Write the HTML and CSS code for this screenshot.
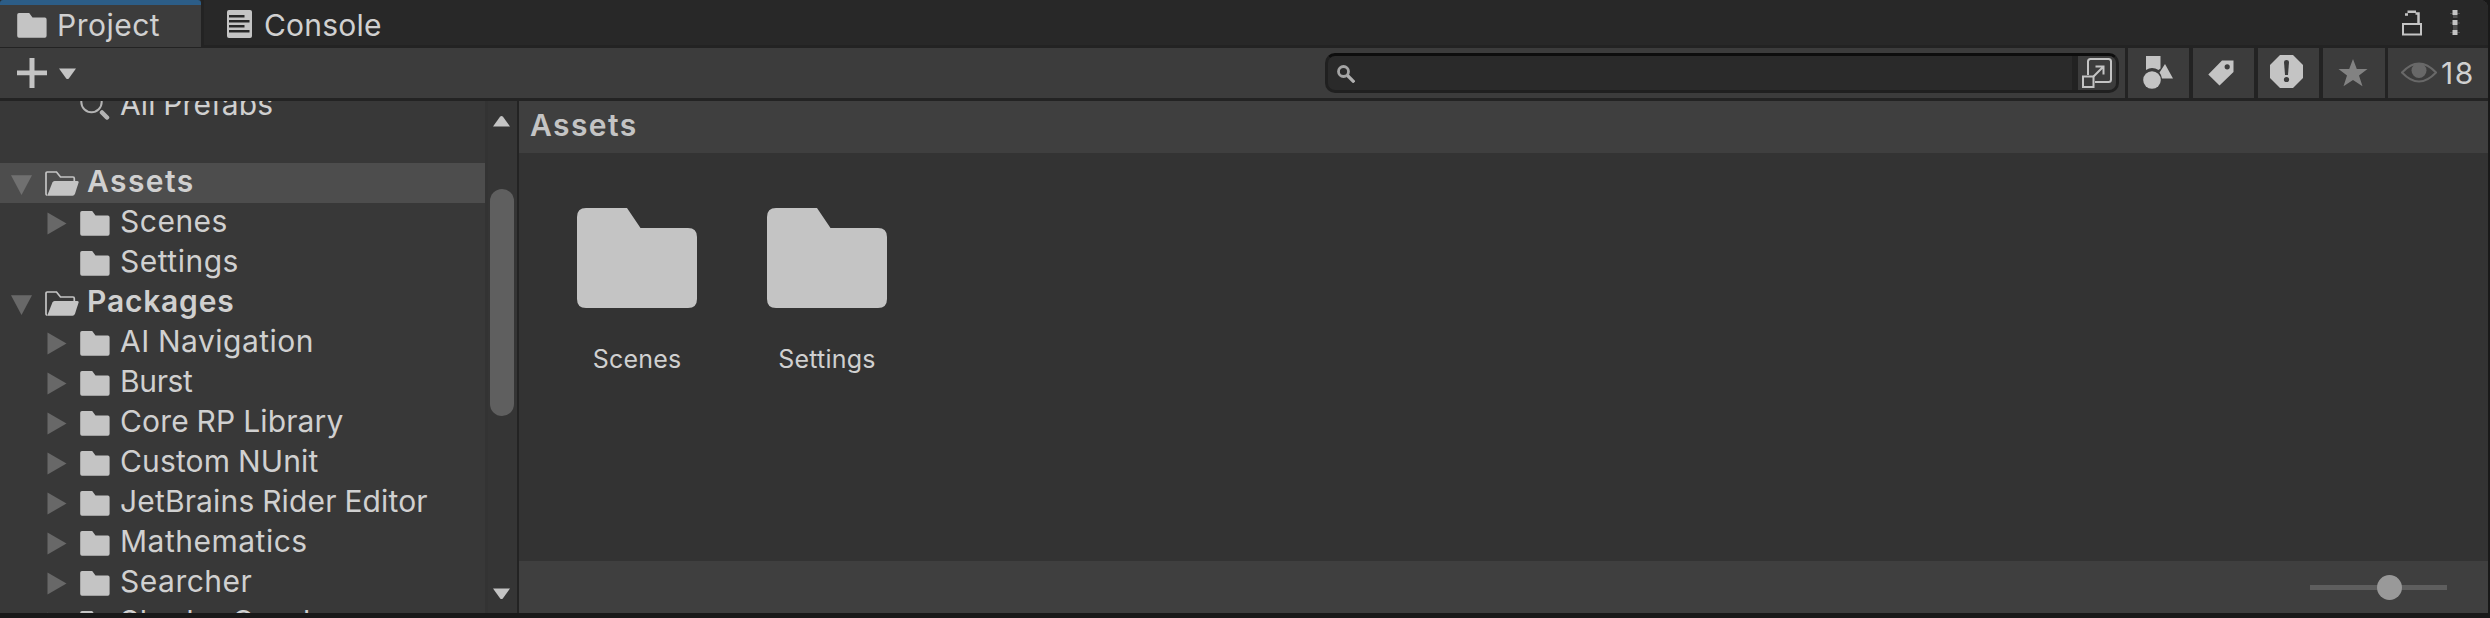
FILE: index.html
```html
<!DOCTYPE html>
<html lang="en">
<head>
<meta charset="utf-8">
<title>Project</title>
<link rel="stylesheet" href="styles.css">
</head>
<body>
<svg class="defs" width="0" height="0">
  <symbol id="folder" viewBox="0 0 30 25"><path d="M2 0H12.2L15.5 4.6H27.8Q29.6 4.6 29.6 6.4V22.8Q29.6 24.7 27.8 24.7H2Q.2 24.7 .2 22.8V1.8Q.2 0 2 0Z"/></symbol>
  <symbol id="folder-big" viewBox="0 0 120 100"><path d="M9 0H50L63.500 20H111Q120 20 120 29V91Q120 100 111 100H9Q0 100 0 91V9Q0 0 9 0Z"/></symbol>
  <symbol id="open" viewBox="0 0 34 25"><path d="M2.200 24Q1 24 1 22.500V2.200Q1 1 2.200 1H11.500L15.500 6H28Q29.300 6 29.300 7.500V10" fill="none" stroke="#c4c4c4" stroke-width="1.700"/><path d="M9.500 10H32.500Q34 10 33.600 11.500L30 22.800Q29.300 24.800 27.500 24.800H2.200L7.400 11.500Q8 10 9.500 10Z"/></symbol>
  <symbol id="right" viewBox="0 0 20 23"><path d="M.5 .5L19.500 11.500L.5 22.500Z"/></symbol>
  <symbol id="down" viewBox="0 0 21 20"><path d="M0 .3H21L10.500 20Z"/></symbol>
  <symbol id="small-down" viewBox="0 0 19 12"><path d="M1 .5H18L11 10.200Q9.500 12 8 10.200Z"/></symbol>
</svg>
<div class="window">
  <header class="tabs">
    <div class="tab active"><svg class="tab-folder"><use href="#folder"/></svg><span>Project</span></div>
    <div class="tab console">
      <svg class="log" viewBox="0 0 25 28"><rect width="25" height="28" rx="2"/><path d="M2 6.200H17.500M2 11.200H22.500M2 16.200H17.500M2 21.300H22.500" stroke="#282828" stroke-width="2.500"/></svg>
      <span>Console</span>
    </div>
    <div class="window-tools">
      <svg class="line" width="20" height="26" viewBox="0 0 20 26" stroke="#c4c4c4"><rect x="1" y="14" width="18" height="10.500" stroke-width="2"/><path d="M3 4.500H6M5.500 1.800H14" stroke-width="2.500"/><path d="M13.500 3.500H16.500V13.500" stroke-width="2.500"/></svg>
      <svg width="10" height="26" viewBox="0 0 10 26"><path d="M0 3H10V4H0ZM0 12.500H10V13.500H0ZM0 22H10V23H0Z" opacity=".25"/><path d="M3 5H7.500V8H3ZM3 15H7.500V20H3Z" opacity=".25"/><path d="M2.500 0H7.500V5H2.500ZM2.500 10H7.500V15H2.500ZM2.500 20H7.500V25H2.500Z"/></svg>
    </div>
  </header>
  <div class="toolbar">
    <div class="create">
      <svg width="30" height="30" viewBox="0 0 30 30"><path d="M12.500 0H17.500V12.500H30V17.200H17.500V30H12.500V17.200H0V12.500H12.500Z"/></svg>
      <svg class="caret"><use href="#small-down"/></svg>
    </div>
    <div class="search">
      <svg class="lens line" viewBox="0 0 18 18"><circle cx="6.500" cy="6.500" r="5" stroke="#a4a4a4" stroke-width="2.800"/><path d="M10.500 10.500L17.300 17.300" stroke="#b0b0b0" stroke-width="3.200"/></svg>
      <div class="expand"><svg class="line" width="30" height="30" viewBox="0 0 30 30" stroke="#c4c4c4" stroke-width="2"><path d="M6 17V3.500Q6 1 8.500 1H26.500Q29 1 29 3.500V21.500Q29 24 26.500 24H13"/><rect x="1" y="18.500" width="10.500" height="10.500"/><path d="M11.500 18.500L21 9M13.500 8.500H21.500V16.500"/></svg></div>
    </div>
    <div class="tool"><svg width="30" height="33" viewBox="0 0 30 33"><path d="M3 0H17.500V12.500L15.500 14Q12.500 12 9 12Q6 12 3 14Z"/><circle cx="9" cy="24" r="8.800"/><path d="M22 8L30 22.500H19Q18.500 19 16.500 16.500Z"/></svg></div>
    <div class="tool"><svg width="26" height="26" viewBox="0 0 26 26"><path fill-rule="evenodd" d="M14 .5H25.500V12L11.500 25.500L.3 14.500ZM19.200 4.200A2.600 2.600 0 1 0 19.200 9.400A2.600 2.600 0 1 0 19.200 4.200Z"/></svg></div>
    <div class="tool"><svg width="33" height="33" viewBox="0 0 33 33"><path d="M10 0H23L33 10V23L23 33H10L0 23V10Z"/><path fill="#3c3c3c" d="M14 7Q14 5 16.500 5Q19 5 19 7L18 20H15Z"/><circle cx="16.500" cy="24.500" r="2.600" fill="#3c3c3c"/></svg></div>
    <div class="tool"><svg class="star" width="30" height="28" viewBox="0 0 30 28"><path d="M15 0L18.800 10H29.500L21 16.500L24.500 27.300L15 21L5.500 27.300L9 16.500L.5 10H11.200Z"/></svg></div>
    <div class="tool hidden-count"><svg width="36" height="22" viewBox="0 0 36 22"><path d="M1 10.500Q18-7.500 35 10.500Q18 28.500 1 10.500Z" fill="none" stroke="#686868" stroke-width="2"/><circle cx="18" cy="8.500" r="7.500" fill="#686868"/></svg><span>18</span></div>
  </div>
  <div class="main">
    <nav class="tree">
      <div class="row prefabs"><svg class="magnify line" viewBox="0 0 30 34" stroke="#b4b4b4"><circle cx="11.500" cy="16" r="10.200" stroke-width="2"/><path d="M22 26.500L27 31.500" stroke-width="4.500" stroke-linecap="round"/></svg><span>All Prefabs</span></div>
      <div class="row root selected"><svg class="fold"><use href="#down"/></svg><svg class="open"><use href="#open"/></svg><span>Assets</span></div>
      <div class="row"><svg class="fold"><use href="#right"/></svg><svg class="folder"><use href="#folder"/></svg><span>Scenes</span></div>
      <div class="row"><i class="fold"></i><svg class="folder"><use href="#folder"/></svg><span>Settings</span></div>
      <div class="row root"><svg class="fold"><use href="#down"/></svg><svg class="open"><use href="#open"/></svg><span>Packages</span></div>
      <div class="row"><svg class="fold"><use href="#right"/></svg><svg class="folder"><use href="#folder"/></svg><span>AI Navigation</span></div>
      <div class="row tight"><svg class="fold"><use href="#right"/></svg><svg class="folder"><use href="#folder"/></svg><span>Burst</span></div>
      <div class="row long"><svg class="fold"><use href="#right"/></svg><svg class="folder"><use href="#folder"/></svg><span>Core RP Library</span></div>
      <div class="row long"><svg class="fold"><use href="#right"/></svg><svg class="folder"><use href="#folder"/></svg><span>Custom NUnit</span></div>
      <div class="row long"><svg class="fold"><use href="#right"/></svg><svg class="folder"><use href="#folder"/></svg><span>JetBrains Rider Editor</span></div>
      <div class="row"><svg class="fold"><use href="#right"/></svg><svg class="folder"><use href="#folder"/></svg><span>Mathematics</span></div>
      <div class="row"><svg class="fold"><use href="#right"/></svg><svg class="folder"><use href="#folder"/></svg><span>Searcher</span></div>
      <div class="row"><svg class="fold"><use href="#right"/></svg><svg class="folder"><use href="#folder"/></svg><span>Shader Graph</span></div>
    </nav>
    <div class="scrollbar">
      <svg class="caret up"><use href="#small-down"/></svg>
      <div class="thumb"></div>
      <svg class="caret"><use href="#small-down"/></svg>
    </div>
    <section class="browser">
      <h1>Assets</h1>
      <div class="grid">
        <div class="item"><svg><use href="#folder-big"/></svg><span>Scenes</span></div>
        <div class="item"><svg><use href="#folder-big"/></svg><span>Settings</span></div>
      </div>
      <footer><div class="slider"><div class="knob"></div></div></footer>
    </section>
  </div>
</div>
</body>
</html>
```
FILE: styles.css
```css
* { box-sizing: border-box; }
body { margin: 0; background: #191919; color: #d0d0d0; font: 400 30px/36px Inter, sans-serif; letter-spacing: .5px; word-spacing: -.8px; overflow: hidden; }
svg { display: block; fill: #c4c4c4; flex: none; }
.line { fill: none; }
.star { fill: #828282; }
span { white-space: nowrap; }
.defs { position: absolute; }
.window { width: 2488px; height: 613px; display: flex; flex-direction: column; background: #3c3c3c; border-top-right-radius: 8px; overflow: hidden; }
.tabs { height: 48px; flex: none; display: flex; background: #282828; border-bottom: 3px solid #232323; }
.tab { display: flex; align-items: flex-start; }
.tab span { padding-top: 7px; }
.tab.active { width: 201px; height: 47px; background: #3c3c3c; border-top: 5px solid #2c5d87; border-radius: 3px 3px 0 0; padding-left: 17px; gap: 10px; }
.tab.active span { padding-top: 2px; }
.tab-folder { width: 30px; height: 25px; margin-top: 8px; }
.tab.console { padding-left: 23px; gap: 12px; letter-spacing: .2px; border-left: 3px solid #232323; }
.log { width: 25px; height: 28px; margin-top: 10px; }
.window-tools { margin-left: auto; display: flex; gap: 28px; padding: 10px 28px 0 0; }
.toolbar { height: 53px; flex: none; display: flex; border-bottom: 3px solid #232323; }
.create { display: flex; gap: 11px; padding: 10px 0 0 17px; }
.caret { width: 19px; height: 12px; }
.create .caret { margin-top: 10px; }
.search { width: 794px; height: 40px; margin: 5px 6px 0 auto; border: 3px solid #202020; border-top-color: #0d0d0d; border-radius: 10px; background: #2a2a2a; display: flex; overflow: hidden; }
.lens { width: 18px; height: 18px; margin: 9px 0 0 9px; }
.expand { margin-left: auto; width: 44px; border-left: 6px solid #222; background: #3c3c3c; padding: 2px 0 0 4px; }
.tool { width: 65px; height: 50px; border-left: 4px solid #232323; display: flex; justify-content: center; align-items: center; }
.tool:nth-child(3) { width: 64px; border-left-width: 3px; padding: 0 2px 2px 0; }
.tool:nth-child(4) { padding-right: 6px; }
.tool:nth-child(5) { padding: 0 4px 3px 0; }
.tool:nth-child(6) { width: 66px; padding-right: 2px; }
.hidden-count { width: 103px; border-left-width: 3px; justify-content: flex-start; padding-left: 13px; gap: 4px; letter-spacing: 1.5px; }
.main { flex: 1; min-height: 0; display: flex; }
.tree { width: 485px; flex: none; background: #383838; overflow: hidden; }
.row { height: 40px; display: flex; padding-left: 47px; }
.fold { width: 20px; height: 23px; margin: 9px 13px 0 0; fill: #686868; }
.folder { width: 30px; height: 25px; margin: 8px 10px 0 0; }
.tight { letter-spacing: -.35px; }
.long { letter-spacing: .15px; }
.root { padding-left: 11px; font-weight: 600; letter-spacing: .8px; }
.root .fold { width: 21px; height: 20px; margin: 12px 13px 0 0; }
.open { width: 34px; height: 25px; margin: 8px 8px 0 0; }
.selected { background: #4d4d4d; letter-spacing: 1.4px; }
.selected .fold { fill: #707070; }
.prefabs { margin: -15px 0 37px; padding-left: 80px; letter-spacing: .1px; }
.magnify { width: 30px; height: 34px; margin-right: 10px; }
.scrollbar { width: 34px; flex: none; border-left: 3px solid #333; border-right: 2px solid #232323; background: #353535; display: flex; flex-direction: column; padding: 14px 0 13px 2px; }
.scrollbar .caret { margin-left: 2px; }
.up { transform: scaleY(-1); }
.thumb { width: 24px; height: 227px; margin: 62px 0 auto; border-radius: 12px; background: #5f5f5f; }
.browser { flex: 1; display: flex; flex-direction: column; background: #333; }
h1 { margin: 0; height: 52px; padding: 6px 0 0 11px; font: 600 30px/36px Inter, sans-serif; letter-spacing: 1.4px; color: #c4c4c4; background: #3f3f3f; }
.grid { flex: 1; display: flex; gap: 70px; padding: 55px 0 0 58px; }
.item { width: 120px; display: flex; flex-direction: column; align-items: center; font-size: 25px; line-height: 30px; letter-spacing: .2px; }
.item svg { width: 120px; height: 100px; margin-bottom: 36px; }
footer { height: 52px; background: #3f3f3f; padding: 24px 41px 0 0; }
.slider { width: 137px; height: 5px; margin-left: auto; background: #5e5e5e; display: flex; align-items: center; padding-left: 67px; }
.knob { width: 25px; height: 25px; flex: none; border-radius: 50%; background: #999; }
```
